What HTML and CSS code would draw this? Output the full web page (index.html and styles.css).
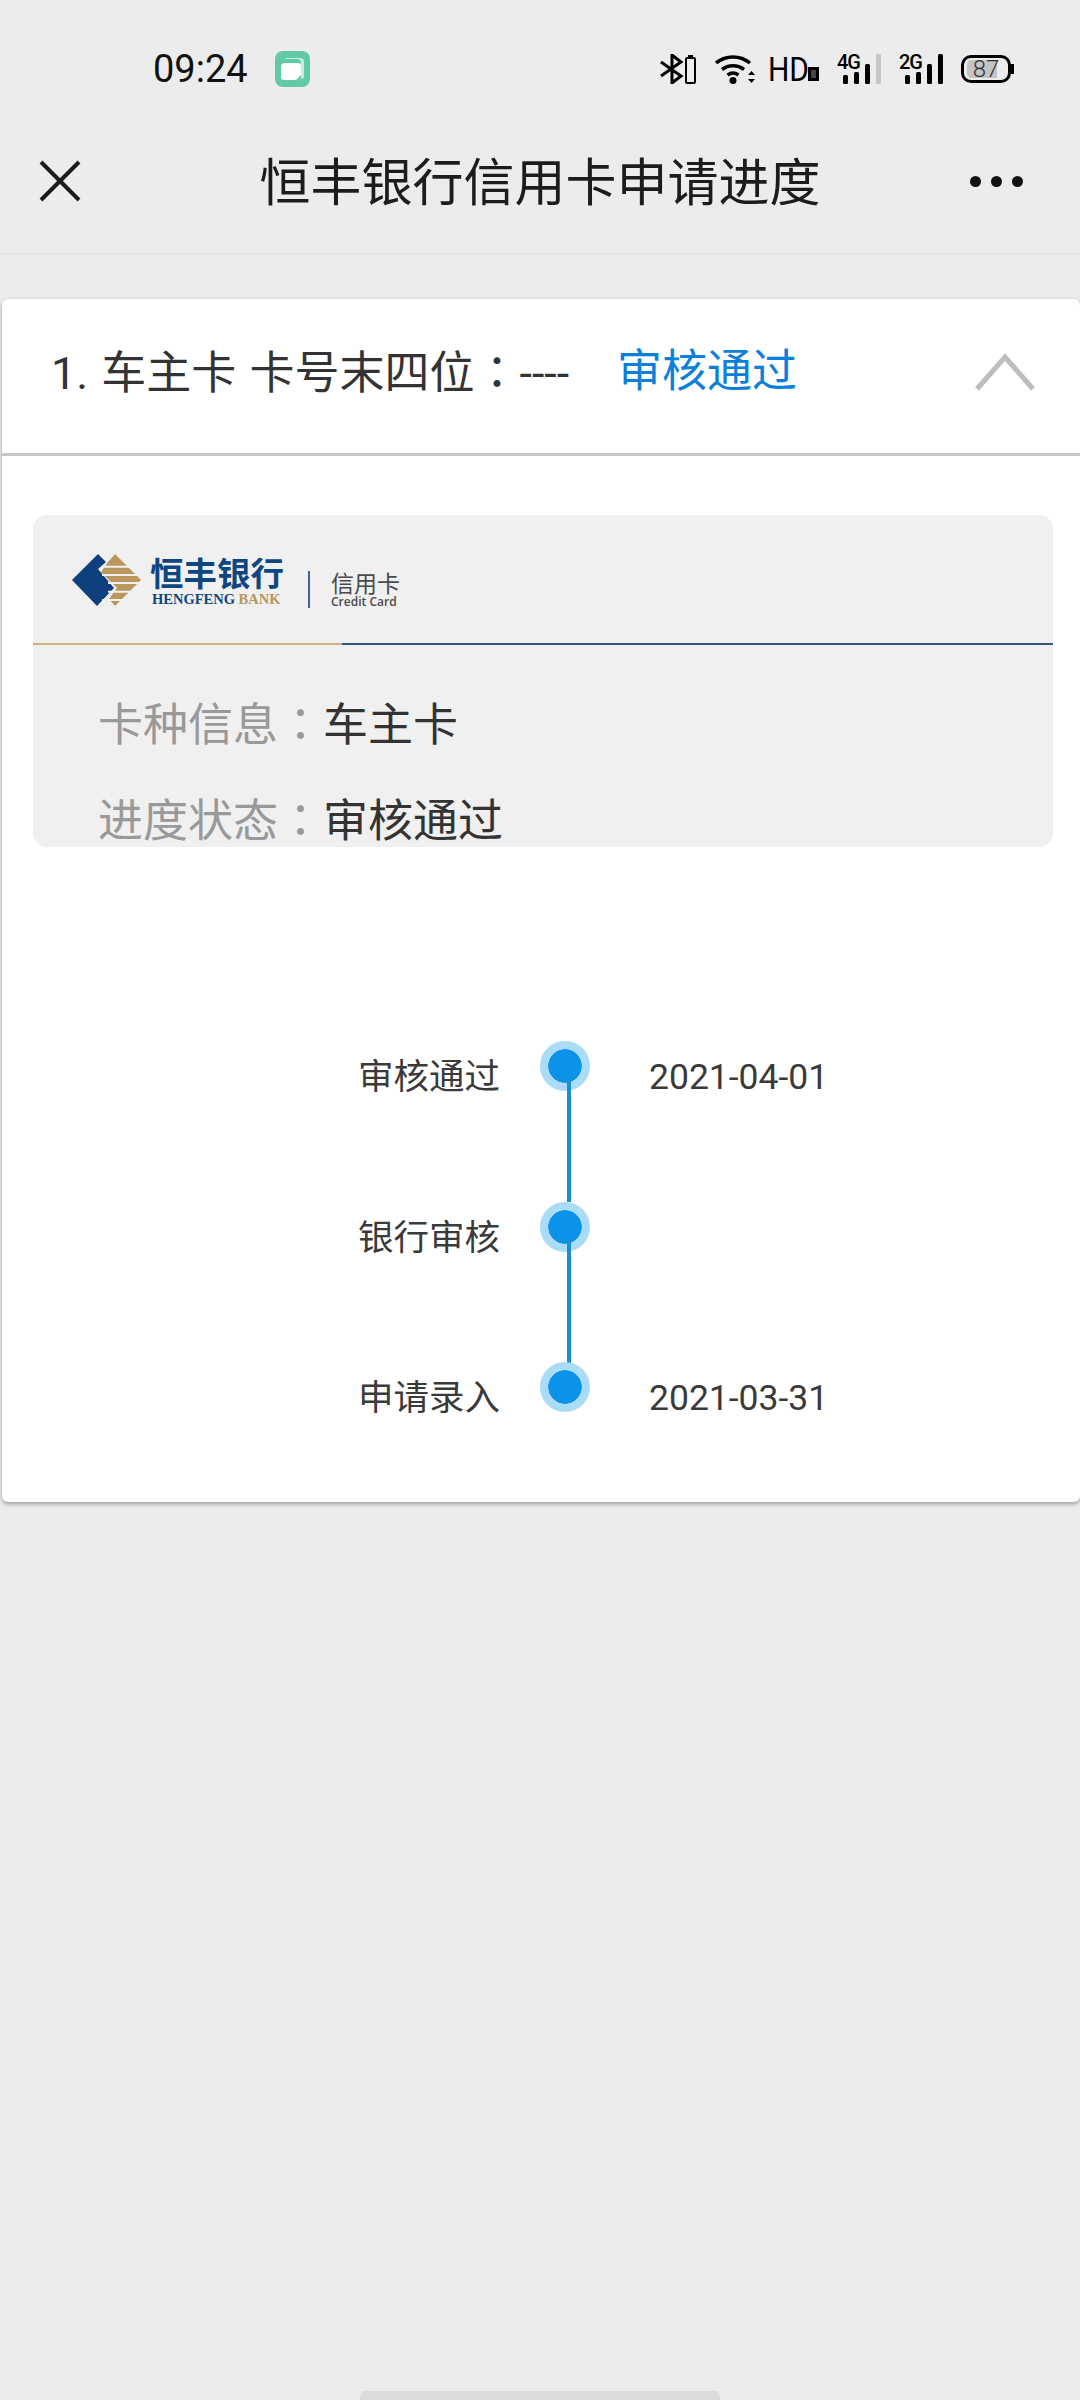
FILE: index.html
```html
<!DOCTYPE html>
<html lang="zh-CN">
<head>
    <meta charset="UTF-8">
    <meta name="viewport" content="width=device-width, initial-scale=1.0">
    <title>恒丰银行信用卡申请进度</title>
    <link rel="stylesheet" href="styles.css">
</head>
<body>
    <div class="status-bar">
        <span class="status-time">09:24</span>
        <svg class="status-app" width="35" height="36" viewBox="0 0 35 36">
            <rect width="35" height="36" rx="8" fill="#62c9a7"/>
            <path d="M12 7h13a4 4 0 0 1 4 4v14a3 3 0 0 1-3 3v-16a4 4 0 0 0-4-4H9a4 4 0 0 1 3-1z" fill="#c4eede"/>
            <path d="M10 12h13a3 3 0 0 1 3 3v9l-5 5H9a3 3 0 0 1-3-3V16a4 4 0 0 1 4-4z" fill="#fff"/>
        </svg>
        <div class="status-icons">
            <svg class="ico-bt" width="36" height="30" viewBox="0 0 36 30">
                <path d="M1 8l20 14-9 7V1l9 7L1 22" fill="none" stroke="#000" stroke-width="3"/>
                <rect x="26" y="4" width="9" height="25" rx="1" fill="none" stroke="#000" stroke-width="2"/>
                <rect x="28" y="1" width="5" height="3" fill="#000"/>
            </svg>
            <svg class="ico-wifi" width="41" height="30" viewBox="0 0 41 30">
                <path d="M1 9a27 27 0 0 1 34 0M7 15.500a18 18 0 0 1 22 0M12.500 21a9.500 9.500 0 0 1 11 0" fill="none" stroke="#000" stroke-width="3.500"/>
                <circle cx="18" cy="26.500" r="3.500" fill="#000"/>
                <path d="M33 21l3.500-4 3.500 4zM33 25l3.500 4 3.500-4z" fill="#000"/>
            </svg>
            <div class="ico-hd"><span>HD</span><i></i></div>
            <svg class="ico-signal" width="44" height="38" viewBox="0 -8 44 38">
                <text x="0" y="15" class="signal-text">4G</text>
                <rect x="6" y="21" width="5" height="9" rx="1.500"/>
                <rect x="17" y="18" width="5" height="12" rx="1.500"/>
                <rect x="28" y="10" width="5" height="20" rx="1.500"/>
                <rect x="39" y="0" width="5" height="30" rx="1.500" fill="#c6c6c6"/>
            </svg>
            <svg class="ico-signal" width="44" height="38" viewBox="0 -8 44 38">
                <text x="0" y="15" class="signal-text">2G</text>
                <rect x="6" y="21" width="5" height="9" rx="1.500"/>
                <rect x="17" y="18" width="5" height="12" rx="1.500"/>
                <rect x="28" y="10" width="5" height="20" rx="1.500"/>
                <rect x="39" y="0" width="5" height="30" rx="1.500"/>
            </svg>
            <div class="ico-battery"><span>87</span></div>
        </div>
    </div>

    <div class="nav-bar">
        <svg class="nav-close" width="42" height="42" viewBox="0 0 42 42">
            <path d="M2 2l38 38M40 2L2 40" fill="none" stroke="#1c1c1c" stroke-width="4"/>
        </svg>
        <h1 class="nav-title">恒丰银行信用卡申请进度</h1>
        <div class="nav-more"><i></i><i></i><i></i></div>
    </div>

    <div class="card">
        <div class="card-header">
            <span class="card-name">1. 车主卡 卡号末四位<span class="colon" lang="zh-TW">：</span>----</span>
            <span class="card-state">审核通过</span>
            <svg class="card-arrow" width="60" height="38" viewBox="0 0 60 38">
                <path d="M2 36L30 4l28 32" fill="none" stroke="#bdbdbd" stroke-width="5"/>
            </svg>
        </div>

        <div class="card-body">
            <div class="info-box">
                <div class="logo-row">
                    <svg class="logo-mark" width="70" height="54" viewBox="0 0 70 54">
                        <path d="M0 27L26 1l8 8-8 7 16 19-17 18z" fill="#0f3f7d"/>
                        <path d="M43 1l26 26-26 26-6-7 8-11-16-16 7-10z" fill="#b8965c"/>
                        <path d="M30 13.700h30M30 22h38M36 30h33M36 38.700h26M30 47h24" stroke="#f0f0f0" stroke-width="2"/>
                    </svg>
                    <div class="logo-bank">
                        <div class="logo-cn">恒丰银行</div>
                        <div class="logo-en">HENGFENG <span>BANK</span></div>
                    </div>
                    <div class="logo-sep"></div>
                    <div class="logo-card">
                        <div class="logo-card-cn">信用卡</div>
                        <div class="logo-card-en">Credit Card</div>
                    </div>
                </div>
                <div class="logo-line"></div>
                <div class="info-row"><span class="info-label">卡种信息<span class="colon" lang="zh-TW">：</span></span><span class="info-value">车主卡</span></div>
                <div class="info-row"><span class="info-label">进度状态<span class="colon" lang="zh-TW">：</span></span><span class="info-value">审核通过</span></div>
            </div>

            <div class="timeline">
                <div class="step">
                    <span class="step-name">审核通过</span>
                    <span class="step-dot"></span>
                    <span class="step-date">2021-04-01</span>
                </div>
                <div class="step">
                    <span class="step-name">银行审核</span>
                    <span class="step-dot"></span>
                    <span class="step-date"></span>
                </div>
                <div class="step">
                    <span class="step-name">申请录入</span>
                    <span class="step-dot"></span>
                    <span class="step-date">2021-03-31</span>
                </div>
            </div>
        </div>
    </div>

    <div class="home-bar"></div>
</body>
</html>
```

FILE: styles.css
```css
* {
    margin: 0;
    padding: 0;
    box-sizing: border-box;
}

body {
    width: 1080px;
    height: 2400px;
    position: relative;
    overflow: hidden;
    background: #ececec;
    color: #333;
    font-family: Roboto, 'Noto Sans CJK SC', sans-serif;
}

.colon {
    font-family: 'Noto Sans CJK TC', sans-serif;
}

/* status bar */
.status-bar {
    height: 90px;
    padding: 51px 69px 0 153px;
    display: flex;
    align-items: flex-start;
}

.status-time {
    font-size: 38px;
    line-height: 36px;
    color: #111;
    width: 122px;
}

.status-icons {
    margin-left: auto;
    padding-top: 3px;
    display: flex;
    align-items: flex-start;
}

.ico-wifi {
    margin-left: 19px;
}

.ico-hd {
    margin-left: 12px;
    width: 69px;
    height: 30px;
    display: flex;
    align-items: flex-end;
    font-size: 34px;
    line-height: 30px;
    color: #000;
}

.ico-hd span {
    transform: scaleX(0.88);
    transform-origin: left center;
    width: 40px;
}

.ico-hd i {
    width: 11px;
    height: 14px;
    margin-bottom: 3px;
    border: 3px solid #000;
    background: #444;
}

.ico-signal {
    margin: -8px 18px 0 0;
}

.signal-text {
    font-family: Roboto, sans-serif;
    font-size: 20px;
    font-weight: 500;
    letter-spacing: -1px;
}

.ico-battery {
    width: 50px;
    height: 28px;
    margin-top: 1px;
    border: 3px solid #000;
    border-radius: 10px;
    position: relative;
    background: linear-gradient(90deg, #c4c4c4 0, #c4c4c4 36px, transparent 36px);
    background-origin: border-box;
    background-clip: content-box;
    padding: 2px 3px;
    font-size: 24px;
    line-height: 18px;
    text-align: center;
    color: #333;
    font-weight: 300;
}

.ico-battery::after {
    content: '';
    position: absolute;
    right: -6px;
    top: 6px;
    width: 3px;
    height: 10px;
    background: #000;
}

/* nav */
.nav-bar {
    height: 165px;
    border-bottom: 2px solid #e6e6e6;
    display: flex;
    align-items: center;
    position: relative;
    padding-top: 25px;
}

.nav-close {
    position: absolute;
    left: 39px;
    top: 70px;
}

.nav-title {
    width: 100%;
    font-size: 51px;
    font-weight: 400;
    color: #1c1c1c;
    text-align: center;
    line-height: 60px;
}

.nav-more {
    position: absolute;
    left: 970px;
    top: 86px;
    display: flex;
    gap: 10px;
}

.nav-more i {
    width: 11px;
    height: 11px;
    border-radius: 50%;
    background: #111;
}

/* card */
.card {
    margin: 44px 0 0 2px;
    background: #fff;
    border-radius: 6px;
    box-shadow: 0 2px 4px rgba(0,0,0,0.35);
}

.card-header {
    height: 157px;
    border-bottom: 3px solid #c6c6c6;
    padding: 0 45px 9px 49px;
    display: flex;
    align-items: center;
    font-size: 45px;
    line-height: 60px;
    color: #333;
}

.card-name {
    width: 566px;
    white-space: nowrap;
    word-spacing: 2px;
}

.card-state {
    color: #0a7fdc;
}

.card-arrow {
    margin-left: auto;
}

.card-body {
    padding: 59px 27px 0 31px;
    height: 1046px;
}

.info-box {
    height: 332px;
    background: #f0f0f0;
    border-radius: 14px;
}

.logo-row {
    height: 128px;
    padding: 38px 0 0 39px;
    display: flex;
    align-items: flex-start;
}

.logo-bank {
    margin-left: 8px;
    width: 133px;
}

.logo-cn {
    font-family: 'Noto Sans CJK SC', sans-serif;
    font-size: 33.500px;
    font-weight: 700;
    line-height: 38px;
    color: #0f4680;
    white-space: nowrap;
}

.logo-en {
    margin-left: 2px;
    font-family: 'Liberation Serif', serif;
    font-size: 14.500px;
    font-weight: 700;
    line-height: 16px;
    color: #0f4680;
    white-space: nowrap;
}

.logo-en span {
    color: #b8965c;
}

.logo-sep {
    width: 2px;
    height: 37px;
    margin: 18px 0 0 25px;
    background: #3d6590;
}

.logo-card {
    margin: 16px 0 0 21px;
    color: #4a4a4a;
}

.logo-card-cn {
    font-family: 'Noto Sans CJK SC', sans-serif;
    font-size: 23px;
    line-height: 27px;
}

.logo-card-en {
    font-family: 'Open Sans', sans-serif;
    font-size: 12px;
    font-weight: 600;
    line-height: 12px;
    white-space: nowrap;
}

.logo-line {
    height: 2px;
    background: linear-gradient(90deg, #cfb083 0, #cfb083 309px, #33597f 309px);
}

.info-row {
    height: 96px;
    padding: 47px 0 0 65px;
    display: flex;
    align-items: baseline;
    font-size: 45px;
    line-height: 60px;
}

.info-label {
    color: #999;
    width: 225px;
    white-space: nowrap;
}

.info-value {
    color: #333;
    white-space: nowrap;
}

/* timeline */
.timeline {
    margin: 229px 0 0 0;
}

.step {
    height: 160.500px;
    display: flex;
    align-items: flex-start;
    font-size: 35.500px;
    line-height: 46px;
}

.step-name {
    width: 467px;
    margin-top: -22px;
    text-align: right;
    white-space: nowrap;
    color: #3a3a3a;
}

.step-dot {
    width: 50px;
    height: 50px;
    margin: -35px 0 0 40px;
    position: relative;
    border-radius: 50%;
    background: #0a93e8;
    border: 8px solid #aadcf8;
    background-clip: padding-box;
}

.step:not(:last-child) .step-dot::after {
    content: '';
    position: absolute;
    left: 18.500px;
    top: 28px;
    width: 4px;
    height: 125px;
    background: #1a8fd0;
}

.step-date {
    margin: -22px 0 0 59px;
    color: #3a3a3a;
}

.home-bar {
    position: absolute;
    left: 360px;
    bottom: 0;
    width: 360px;
    height: 9px;
    background: #dcdcdc;
    border-radius: 5px 5px 0 0;
}
```
